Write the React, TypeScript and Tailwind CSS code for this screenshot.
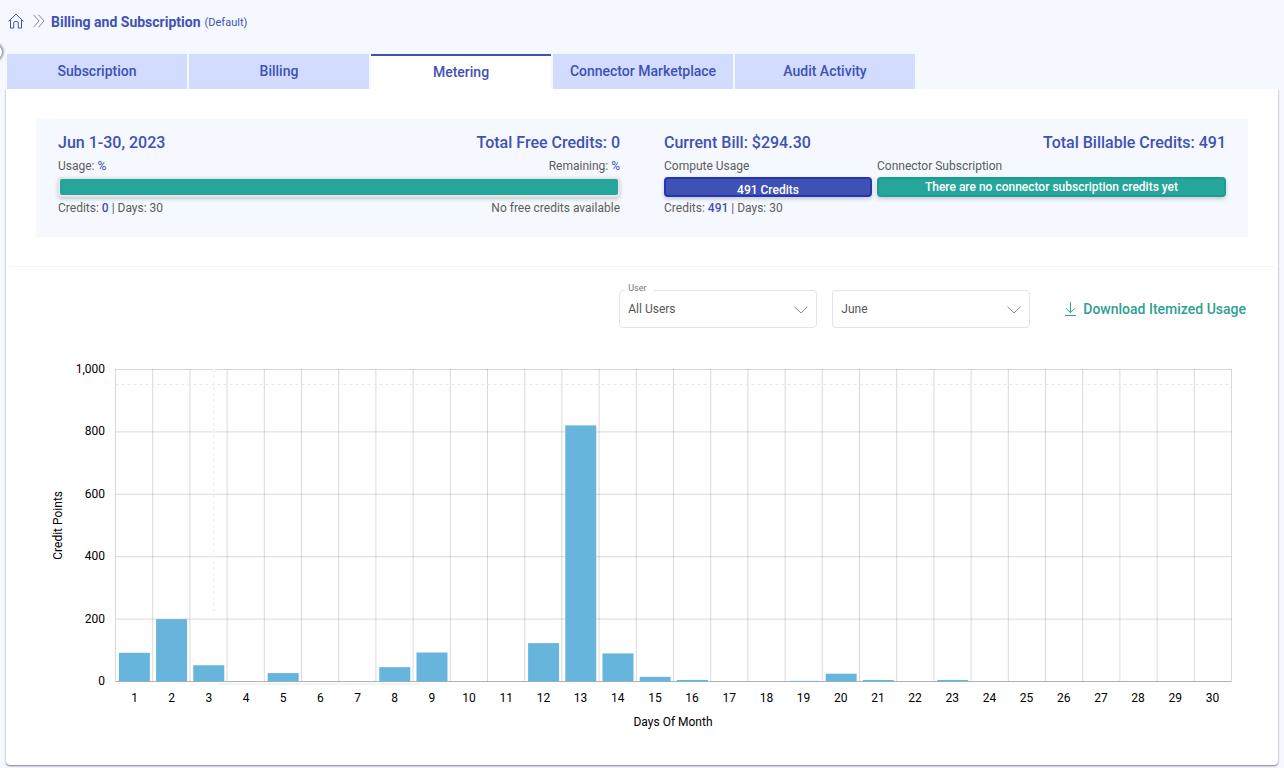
import { useState } from "react"
import clsx from "clsx"

const tabs = ["Subscription", "Billing", "Metering", "Connector Marketplace", "Audit Activity"]

const months = ["May", "June", "July"]

// credit points per day, index 0 is the 1st
const usage = [
  92, 200, 52, 0, 27, 0, 0, 46, 93, 0, 0, 123, 821, 90, 15, 5, 0, 0, 2, 25, 5, 0, 5, 0, 0, 0, 0, 0, 0, 0,
]

const ticks = [1000, 800, 600, 400, 200, 0]
const MAX = 1000
const PLOT = 312

function pct(n: number) {
  return `${n * 100}%`
}

function HomeIcon() {
  return (
    <svg className="size-4" viewBox="0 0 16 16" fill="none" stroke="#3f51b5" strokeLinejoin="round" strokeLinecap="round">
      <path d="M0.7 8.2 8 1.2l7.3 7M2.5 6.8v8.3h3.2V9.6c0-.6.4-1 1-1h2.6c.6 0 1 .4 1 1v5.5h3.2V6.8" />
    </svg>
  )
}

function DoubleChevron() {
  return (
    <svg className="w-3 h-3.5" viewBox="0 0 12 14" fill="none" stroke="#85878f">
      <path d="M0.6 0.8 6 7l-5.4 6.2M5.6 0.8 11 7l-5.4 6.2" />
    </svg>
  )
}

function DownloadIcon() {
  return (
    <svg className="w-3 h-4" viewBox="0 0 12 16" fill="none" stroke="#26a69a">
      <path d="M6.5 1v10.5M2.3 7.5l4.2 4.2 4.2-4.2M1 14.5h11" />
    </svg>
  )
}

function SelectBox({ id, label, floating, options, initial }: {
  id: string
  label: string
  floating?: boolean
  options: string[]
  initial: string
}) {
  return (
    <div className="relative w-[198px]">
      {floating && (
        <label htmlFor={id} className="absolute left-[5px] -top-2 bg-white pl-1 pr-1.5 text-[9px] leading-3 text-[#777]">
          {label}
        </label>
      )}
      <select
        id={id}
        aria-label={floating ? undefined : label}
        defaultValue={initial}
        className="appearance-none w-full h-[38px] pl-2 pr-8 rounded border border-[#e4e4e4] bg-transparent text-xs text-[#555]"
      >
        {options.map((o) => (
          <option key={o}>{o}</option>
        ))}
      </select>
      <svg className="absolute right-2 top-4 w-4 h-2 pointer-events-none" viewBox="0 0 16 8" fill="none" stroke="#888">
        <path d="M1.5 0.7 8 7l6.5-6.3" />
      </svg>
    </div>
  )
}

function UsageChart() {
  const step = PLOT / (ticks.length - 1)

  return (
    <div className="flex pl-11 pr-[47px] pt-[33px]">
      <div className="w-4 h-[328px] flex items-center justify-center">
        <span className="[writing-mode:vertical-rl] rotate-180 text-xs text-black">Credit Points</span>
      </div>
      <div className="w-[39px] h-[328px] flex flex-col justify-between text-right text-xs text-black">
        {ticks.map((t) => (
          <span key={t}>{t.toLocaleString("en-US")}</span>
        ))}
      </div>
      <div className="flex-1 ml-2.5 pt-2">
        <svg className="block w-full h-[313px] overflow-visible">
          {/* half a pixel keeps the outer lines crisp */}
          <g transform="translate(0.5 0)">
            {ticks.map((t, i) => (
              <line key={t} x1="0" x2="100%" y1={0.5 + i * step} y2={0.5 + i * step} stroke="#000" strokeOpacity={t === 0 ? 0.3 : 0.15} />
            ))}
            {Array.from({ length: usage.length + 1 }, (_, i) => (
              <line key={i} x1={pct(i / usage.length)} x2={pct(i / usage.length)} y1="0" y2={PLOT} stroke="#000" strokeOpacity="0.15" />
            ))}
            <line x1="0" x2="100%" y1="15.5" y2="15.5" stroke="#e8e8e8" strokeDasharray="3 3" />
            <line x1="8.83%" x2="8.83%" y1="0" y2="242" stroke="#f3f3f3" strokeWidth="2" strokeDasharray="3 3" />
            <line x1="9.2%" x2="27.3%" y1="315" y2="315" stroke="#f4f4f4" strokeWidth="2" />
            {usage.map((v, i) => {
              const h = (v / MAX) * PLOT
              return (
                <rect key={i} x={pct((i + 1 / 11) / usage.length)} y={PLOT + 0.5 - h} width={pct(10 / 12 / usage.length)} height={h} fill="#67b5dc" />
              )
            })}
          </g>
        </svg>
        <div className="mt-2 pl-px grid grid-cols-[repeat(30,minmax(0,1fr))] text-center text-xs text-black">
          {usage.map((_, i) => (
            <span key={i}>{i + 1}</span>
          ))}
        </div>
        <div className="mt-2 text-center text-xs text-black">Days Of Month</div>
      </div>
    </div>
  )
}

export default function App() {
  const [active, setActive] = useState("Metering")

  return (
    <div className="relative min-h-screen overflow-hidden bg-[#f5f8ff] font-['Roboto',sans-serif] text-[#3f51b5]">
      <div className="absolute -left-3.5 top-11 size-4 rounded-full bg-white shadow-[0_0_3px_1px_rgba(0,0,0,0.6)]" />

      <header className="flex items-center h-11 pl-2">
        <a href="#" aria-label="Home" className="-mt-0.5">
          <HomeIcon />
        </a>
        <span className="ml-[9px] mr-1.5 -mt-0.5">
          <DoubleChevron />
        </span>
        <h1 className="text-sm font-bold">Billing and Subscription</h1>
        <span className="ml-1 pt-[3px] text-[11px]">(Default)</span>
      </header>

      <nav className="flex gap-0.5 pl-[7px] pt-2.5">
        {tabs.map((tab) => (
          <button
            key={tab}
            onClick={() => setActive(tab)}
            className={clsx(
              "w-[180px] h-[35px] pb-0.5 text-sm font-medium",
              tab === active ? "bg-white border-t-2 border-[#3f51b5]" : "bg-[#d1dcff]"
            )}
          >
            {tab}
          </button>
        ))}
      </nav>

      <main className="ml-1.5 mr-1.5 mb-0.5 rounded-b bg-white shadow-[0_1px_2px_rgba(0,0,0,0.5)] [clip-path:inset(0_-4px_-4px_-4px)]">
        <section className="px-[30px] pt-[30px] pb-[29px]">
          <div className="grid grid-cols-2 gap-11 px-[22px] pt-3 pb-[18px] bg-[#f5f8ff] text-xs text-[#5c5c5c]">
            <div>
              <div className="flex justify-between text-base font-medium text-[#3f51b5]">
                <h2>Jun 1-30, 2023</h2>
                <h2>Total Free Credits: 0</h2>
              </div>
              <div className="flex justify-between leading-[22px]">
                <span>Usage: <span className="text-[#3f51b5]">%</span></span>
                <span>Remaining: <span className="text-[#3f51b5]">%</span></span>
              </div>
              <div className="h-5 rounded border-2 border-[#e4e6ea] bg-[#26a69a] shadow-[0_2px_4px_rgba(0,0,0,0.2)]" />
              <div className="flex justify-between leading-[22px]">
                <span>Credits: <span className="font-medium text-[#3f51b5]">0</span> | Days: 30</span>
                <span>No free credits available</span>
              </div>
            </div>

            <div>
              <div className="flex justify-between text-base font-medium text-[#3f51b5]">
                <h2>Current Bill: $294.30</h2>
                <h2>Total Billable Credits: 491</h2>
              </div>
              <div className="grid grid-cols-[208fr_349fr] gap-[5px]">
                <div>
                  <div className="leading-[22px]">Compute Usage</div>
                  <div className="h-5 pt-[3px] rounded border-2 border-[#2436b4] bg-[#3f51b5] text-center font-medium leading-4 text-white shadow-[0_2px_4px_rgba(0,0,0,0.2)]">
                    491 Credits
                  </div>
                  <div className="leading-[22px]">Credits: <span className="font-medium text-[#3f51b5]">491</span> | Days: 30</div>
                </div>
                <div>
                  <div className="leading-[22px]">Connector Subscription</div>
                  <div className="h-5 rounded border-2 border-[#1f9c90] bg-[#26a69a] text-center font-medium leading-4 text-white shadow-[0_2px_4px_rgba(0,0,0,0.2)]">
                    There are no connector subscription credits yet
                  </div>
                </div>
              </div>
            </div>
          </div>
        </section>

        <section className="rounded-t-md border-t border-[#f5f5f5] pt-[23px] pb-[35px]">
          <div className="flex items-center justify-end pr-8">
            <div className="flex gap-[15px]">
              <SelectBox id="user" label="User" floating options={["All Users"]} initial="All Users" />
              <SelectBox id="month" label="Month" options={months} initial="June" />
            </div>
            <button className="ml-[34px] flex items-center gap-[7px] text-sm font-medium text-[#2f9f93]">
              <DownloadIcon />
              Download Itemized Usage
            </button>
          </div>
          <UsageChart />
        </section>
      </main>
    </div>
  )
}
